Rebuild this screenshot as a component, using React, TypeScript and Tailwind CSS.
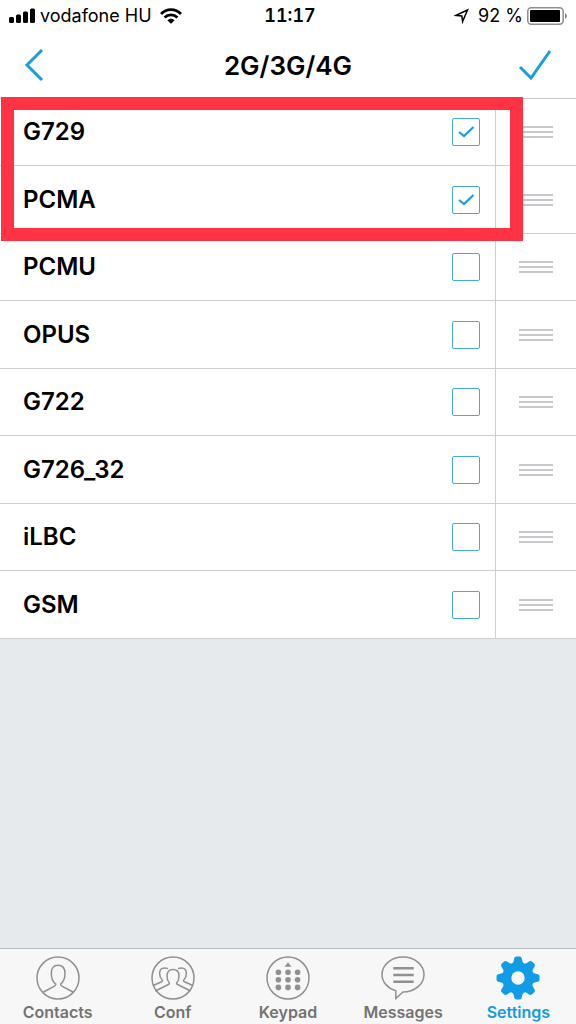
import React, { useState } from 'react';

interface Codec {
  name: string;
  enabled: boolean;
}

const initialCodecs: Codec[] = [
  { name: 'G729', enabled: true },
  { name: 'PCMA', enabled: true },
  { name: 'PCMU', enabled: false },
  { name: 'OPUS', enabled: false },
  { name: 'G722', enabled: false },
  { name: 'G726_32', enabled: false },
  { name: 'iLBC', enabled: false },
  { name: 'GSM', enabled: false },
];

const StatusBar = () => (
  <div className="grid h-8 grid-cols-3 items-center px-2 text-lg leading-8 text-black">
    <div className="flex items-center gap-1 whitespace-nowrap">
      <svg className="shrink-0" width="28" height="16" viewBox="0 0 28 16" fill="currentColor" aria-hidden="true">
        <rect x="1" y="9" width="5" height="6" rx="1.5" />
        <rect x="8" y="6.5" width="5" height="8.5" rx="1.5" />
        <rect x="15" y="3.5" width="5" height="11.5" rx="1.5" />
        <rect x="22" y="0.5" width="5" height="14.5" rx="1.5" />
      </svg>
      <span>vodafone HU</span>
      <svg className="ml-1 shrink-0" width="22" height="16" viewBox="0 0 22 16" fill="none" stroke="currentColor" strokeWidth="2.8" aria-hidden="true">
        <path d="M1 6C6.5 0.2 15.5 0.2 21 6" />
        <path d="M4.6 9.6C8.2 6 13.8 6 17.4 9.6" />
        <path d="M7.3 12.2C9.5 10.1 12.5 10.1 14.7 12.2L11 15.8Z" fill="currentColor" stroke="none" />
      </svg>
    </div>
    <span className="justify-self-center pl-1 font-semibold tabular-nums">11:17</span>
    <div className="flex items-center justify-end gap-1 whitespace-nowrap">
      <svg className="mr-1 shrink-0" width="16" height="16" viewBox="0 0 16 16" fill="none" stroke="currentColor" strokeWidth="1.5" aria-hidden="true">
        <path d="M13.5 2L2 7.4L7.9 8L8.6 13.5Z" />
      </svg>
      <span>92 %</span>
      <svg className="shrink-0" width="41" height="18" viewBox="0 0 41 18" aria-hidden="true">
        <rect x="0.8" y="0.8" width="35.4" height="16.4" rx="3.5" fill="none" stroke="#8e8e8e" strokeWidth="1.5" />
        <rect x="3" y="3" width="30" height="12" rx="1" fill="#000" />
        <path d="M38 6C40.5 7 40.5 11 38 12Z" fill="#8e8e8e" />
      </svg>
    </div>
  </div>
);

const Header = () => (
  <header className="flex h-[67px] items-center justify-between border-b border-[#c8c7cc] px-6">
    <button type="button" aria-label="Back" className="flex w-10 text-[#1a9de0]">
      <svg width="20" height="34" viewBox="0 0 20 34" fill="none" stroke="currentColor" strokeWidth="3" aria-hidden="true">
        <path d="M18 2L3 17L18 32" />
      </svg>
    </button>
    <h1 className="text-[26px] font-semibold text-black">2G/3G/4G</h1>
    <button type="button" aria-label="Done" className="flex w-10 justify-end text-[#1a9de0]">
      <svg width="34" height="32" viewBox="0 0 34 32" fill="none" stroke="currentColor" strokeWidth="3" aria-hidden="true">
        <path d="M2 18L13 29L32 2" />
      </svg>
    </button>
  </header>
);

interface CodecRowProps {
  codec: Codec;
  onToggle: () => void;
}

const CodecRow = ({ codec, onToggle }: CodecRowProps) => (
  <li className="flex border-b border-[#cfcfd1] bg-white odd:h-[67px] even:h-[68px]">
    <label className="flex flex-1 items-center justify-between pl-[23px] pr-[15px] text-2xl font-semibold text-black">
      {codec.name}
      <span className="grid">
        <input
          type="checkbox"
          checked={codec.enabled}
          onChange={onToggle}
          className="peer col-start-1 row-start-1 size-7 appearance-none rounded-xs border border-[#45aade] bg-white"
        />
        <svg
          className="pointer-events-none invisible col-start-1 row-start-1 size-7 text-[#1a9de0] peer-checked:visible"
          viewBox="0 0 28 28"
          fill="none"
          stroke="currentColor"
          strokeWidth="2.2"
          aria-hidden="true"
        >
          <path d="M7 14L12 18L21.5 9" />
        </svg>
      </span>
    </label>
    <button type="button" aria-label={`Reorder ${codec.name}`} className="flex w-[81px] flex-col items-center justify-center gap-[3px] border-l border-[#cfcfd1]">
      <span className="h-0.5 w-[34px] bg-[#c7c7cc]" />
      <span className="h-0.5 w-[34px] bg-[#c7c7cc]" />
      <span className="h-0.5 w-[34px] bg-[#c7c7cc]" />
    </button>
  </li>
);

const ContactsIcon = () => (
  <svg width="44" height="44" viewBox="0 0 44 44" fill="none" stroke="currentColor" strokeWidth="1.5" aria-hidden="true">
    <circle cx="22" cy="22" r="21" />
    <path d="M7.5 36L18 30.3C19.3 29.6 20 29 19.8 28.2C16.5 25.5 15.3 21.5 15.3 17.5C15.3 12.2 17.5 9.2 22 9.2C26.5 9.2 29 12.2 29 17.5C29 21.5 27.8 25.5 24.6 28.2C24.4 29 25 29.6 26.3 30.3L37 36" />
  </svg>
);

const ConfIcon = () => (
  <svg width="44" height="44" viewBox="0 0 44 44" fill="none" stroke="currentColor" strokeWidth="1.5" aria-hidden="true">
    <circle cx="22" cy="22" r="21" />
    <path d="M4.3 35L16.5 29C18.2 28.2 18.7 27.8 18.3 27C16.6 25 16 22.5 16 19.8C16 15.8 18 13.5 22 13.5C26 13.5 28 15.8 28 19.8C28 22.5 27.4 25 25.7 27C25.3 27.8 25.8 28.2 27.5 29L39.7 35" />
    <path d="M2.2 29.5L10 26C11.5 25.3 11.8 25 11.2 24C9.3 22 8.6 20 8.6 17.5C8.6 13.8 10.5 12 13.5 12C15 12 16 12.2 17 12.6" />
    <path d="M41.8 29.500L34 26C32.500 25.300 32.200 25 32.800 24C34.700 22 35.400 20 35.400 17.500C35.400 13.800 33.500 12 30.500 12C29 12 28 12.200 27 12.600" />
  </svg>
);

const KeypadIcon = () => (
  <svg width="44" height="44" viewBox="0 0 44 44" fill="currentColor" aria-hidden="true">
    <circle cx="22" cy="22" r="21" fill="none" stroke="currentColor" strokeWidth="1.5" />
    <path d="M22 6.2L25.5 10.8H18.5Z" />
    {[16.2, 23.8, 31.4].map((y) =>
      [12.4, 22, 31.6].map((x) => <circle key={`${x}-${y}`} cx={x} cy={y} r="2.8" />)
    )}
  </svg>
);

const MessagesIcon = () => (
  <svg width="44" height="44" viewBox="0 0 44 44" fill="none" stroke="currentColor" strokeWidth="1.5" aria-hidden="true">
    <path d="M22 1C33.6 1 43 8.8 43 18.5C43 28.2 33.6 36 22 36L14.8 42.5V34.8C6.5 32.2 1 26 1 18.5C1 8.8 10.4 1 22 1Z" />
    <path d="M12.3 12.3H32.7M12.3 19H32.7M12.3 25.8H32.7" strokeWidth="2.4" />
  </svg>
);

const SettingsIcon = () => (
  <svg width="44" height="44" viewBox="0 0 44 44" aria-hidden="true">
    <g fill="currentColor">
      <circle cx="22" cy="22" r="15.6" />
      {[0, 45, 90, 135, 180, 225, 270, 315].map((angle) => (
        <path
          key={angle}
          transform={`rotate(${angle} 22 22)`}
          d="M14 9C17 7.5 17.5 6 18 3.5C18.3 1.5 19 0.5 20.5 0.5H23.5C25 0.5 25.7 1.5 26 3.5C26.5 6 27 7.5 30 9Z"
        />
      ))}
    </g>
    <circle cx="22" cy="22" r="6.7" fill="#f7f7f7" />
  </svg>
);

const tabs = [
  { label: 'Contacts', icon: <ContactsIcon /> },
  { label: 'Conf', icon: <ConfIcon /> },
  { label: 'Keypad', icon: <KeypadIcon /> },
  { label: 'Messages', icon: <MessagesIcon /> },
  { label: 'Settings', icon: <SettingsIcon />, active: true },
];

const TabBar = () => (
  <nav className="grid grid-cols-5 border-t border-[#b9bcbe] bg-[#f7f7f7] pt-[7px]">
    {tabs.map((tab) => (
      <a
        key={tab.label}
        href="#"
        aria-current={tab.active ? 'page' : undefined}
        className={`flex flex-col items-center ${tab.active ? 'text-[#109ce6]' : 'text-[#909090]'}`}
      >
        {tab.icon}
        <span className={`text-base font-semibold leading-6 ${tab.active ? '' : 'text-[#737373]'}`}>{tab.label}</span>
      </a>
    ))}
  </nav>
);

const App = () => {
  const [codecs, setCodecs] = useState(initialCodecs);

  const toggle = (name: string) => {
    setCodecs(codecs.map((c) => (c.name === name ? { ...c, enabled: !c.enabled } : c)));
  };

  return (
    <div className="flex min-h-screen flex-col bg-white font-[Inter,sans-serif]">
      <StatusBar />
      <Header />
      <main className="relative flex-1 bg-[#e6eaed]">
        <ul>
          {codecs.map((codec) => (
            <CodecRow key={codec.name} codec={codec} onToggle={() => toggle(codec.name)} />
          ))}
        </ul>
        {/* highlight around the first two codecs */}
        <div className="pointer-events-none absolute -top-0.5 left-px right-[53px] h-36 border-[13px] border-[#ff3344]" />
      </main>
      <TabBar />
    </div>
  );
};

export default App;
